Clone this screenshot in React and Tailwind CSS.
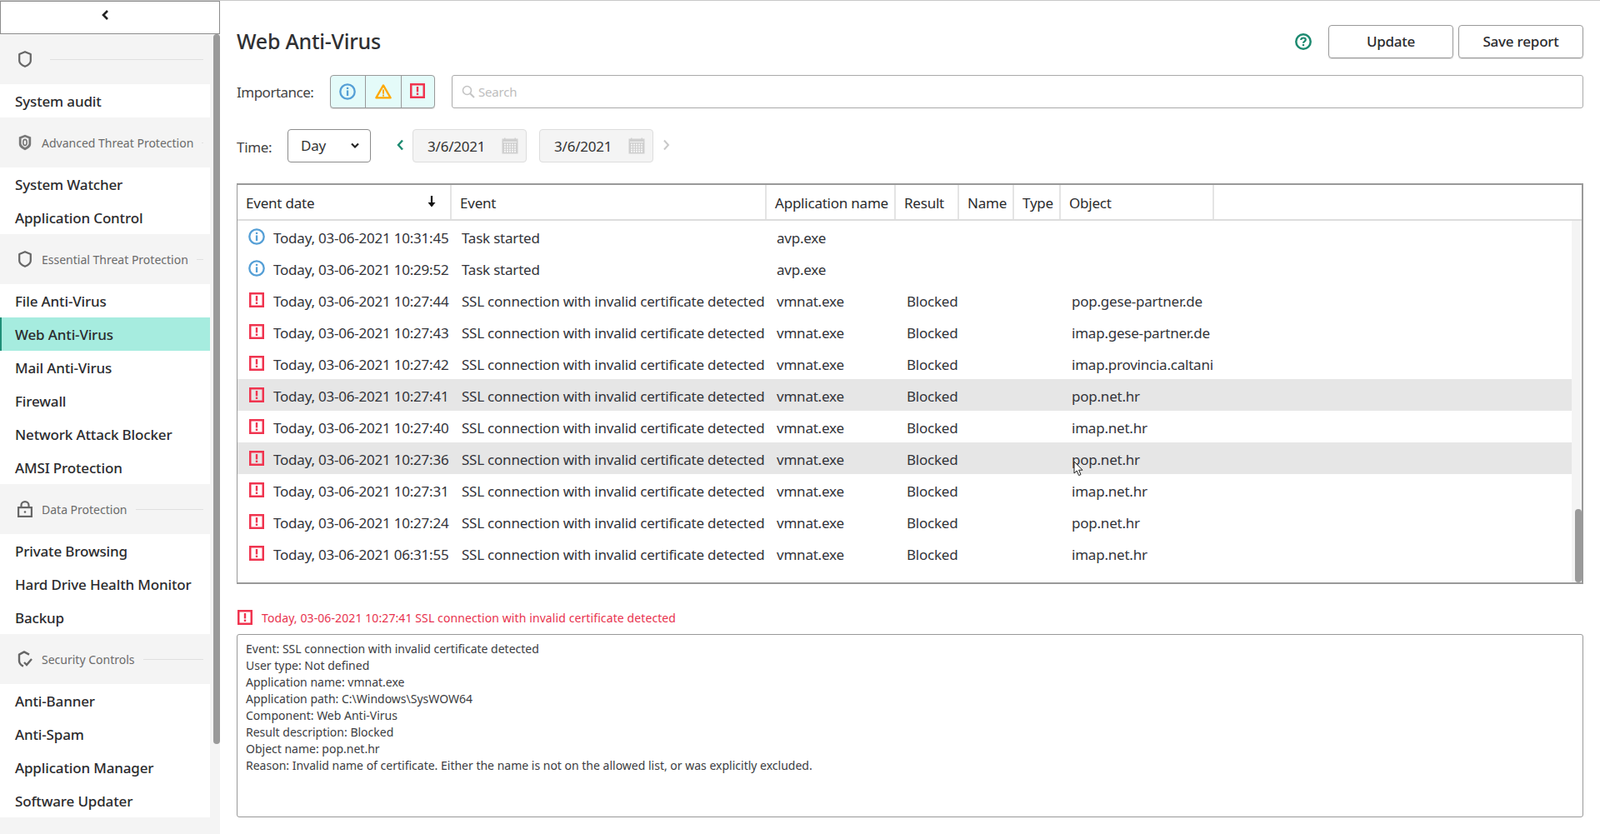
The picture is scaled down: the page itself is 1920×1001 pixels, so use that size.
const Info = ({ s = 20 }) => (
  <svg width={s} height={s} viewBox="0 0 20 20" fill="none">
    <circle cx="10" cy="10" r="8.7" stroke="#559fd6" strokeWidth="2.3" />
    <rect x="8.9" y="8.4" width="2.3" height="6.6" fill="#559fd6" />
    <rect x="8.9" y="4.8" width="2.3" height="2.2" fill="#559fd6" />
  </svg>
);
const Warn = () => (
  <svg width="20" height="20" viewBox="0 0 20 20" fill="none">
    <path d="M10 2.4 L18.6 17.4 H1.4 Z" stroke="#ffa800" strokeWidth="2.3" strokeLinejoin="round" />
    <rect x="9" y="7.5" width="2" height="5.2" fill="#ffa800" />
    <rect x="9" y="13.6" width="2" height="2" fill="#ffa800" />
  </svg>
);
const Danger = ({ s = 18 }) => (
  <svg width={s} height={s} viewBox="0 0 18 18" fill="none">
    <rect x="1.25" y="1.25" width="15.5" height="15.5" stroke="#f0344f" strokeWidth="2.5" />
    <rect x="7.8" y="4" width="2.4" height="6.4" fill="#f0344f" />
    <rect x="7.8" y="11.6" width="2.4" height="2.4" fill="#f0344f" />
  </svg>
);
const Calendar = () => (
  <svg width="20" height="20" viewBox="0 0 20 20" fill="#cfcfcf">
    <rect x="0.5" y="1.5" width="19" height="18" />
    <rect x="3" y="0.5" width="1.5" height="2" />
    <rect x="15.5" y="0.5" width="1.5" height="2" />
    <g fill="#f4f4f4">
      <rect x="2" y="5" width="16" height="1" />
      {[7.5, 10.5, 13.5, 16].map((y) =>
        [3, 6, 9, 12, 15].map((x) => <rect key={x + "-" + y} x={x} y={y} width="2" height="1.8" />)
      )}
    </g>
  </svg>
);
const Shield = () => (
  <svg width="16" height="20" viewBox="0 0 16 20" fill="none">
    <path d="M8 1.2 L14.8 4 V12 C14.8 15 11 17.6 8 18.8 C5 17.6 1.2 15 1.2 12 V4 Z" stroke="#666" strokeWidth="2.2" strokeLinejoin="round" />
  </svg>
);
const ShieldCore = () => (
  <svg width="16" height="20" viewBox="0 0 16 20" fill="none">
    <path d="M8 0.8 L15.2 3.6 V12 C15.2 15.4 11 18 8 19.2 C5 18 0.8 15.4 0.8 12 V3.6 Z" fill="#777" />
    <path d="M8 3.6 L12.4 5.2 V11.6 C12.4 13.4 10 15.2 8 16 C6 15.2 3.6 13.4 3.6 11.6 V5.2 Z" fill="#f4f4f4" />
    <ellipse cx="8" cy="10" rx="2.2" ry="3.6" fill="none" stroke="#777" strokeWidth="1.6" />
  </svg>
);
const Lock = () => (
  <svg width="18" height="20" viewBox="0 0 18 20" fill="none">
    <path d="M4.5 9 V5.5 C4.5 3 6.5 1.2 9 1.2 C11.5 1.2 13.5 3 13.5 5.5 V9" stroke="#666" strokeWidth="2.2" />
    <rect x="1.1" y="8.1" width="15.8" height="10.8" stroke="#666" strokeWidth="2.2" />
    <circle cx="9" cy="13.5" r="1.3" fill="#666" />
  </svg>
);
const ShieldCheck = () => (
  <svg width="18" height="20" viewBox="0 0 18 20" fill="none">
    <path d="M14 4.6 L8 1.4 L2 4.6 V12 C2 15 4.4 17.4 7 18.6" stroke="#666" strokeWidth="2.4" strokeLinejoin="round" />
    <path d="M8 14 L11 17 L17 10" stroke="#666" strokeWidth="2.4" />
  </svg>
);

const Section = ({ icon, label }) => (
  <div className="h-[60px] pl-[20px] pr-[8px] flex items-center">
    <span className="w-[20px] flex justify-center shrink-0">{icon}</span>
    <span className="ml-[10px] text-[14px] text-[#6b6b6b] whitespace-nowrap">{label}</span>
    <span className="ml-[10px] flex-1 h-px bg-[#e0e0e0]" />
  </div>
);
const Item = ({ label, active }) => (
  <div
    className={
      "h-[40px] pt-[1px] flex items-center text-[17px] font-medium text-[#2b2b2e] whitespace-nowrap tracking-[-0.15px] " +
      (active ? "bg-[#a6ecdf] border-l-[2px] border-[#1f8f78] pl-[16px]" : "bg-white pl-[18px]")
    }
  >
    {label}
  </div>
);

const cols = ["w-[257px]", "w-[378px]", "w-[155px]", "w-[76px]", "w-[66px]", "w-[56px]", "w-[184px]"];
const heads = ["Event date", "Event", "Application name", "Result", "Name", "Type", "Object"];

const SSL = "SSL connection with invalid certificate detected";
const rows = [
  ["i", "10:31:45", "Task started", "avp.exe", "", ""],
  ["i", "10:29:52", "Task started", "avp.exe", "", ""],
  ["d", "10:27:44", SSL, "vmnat.exe", "Blocked", "pop.gese-partner.de"],
  ["d", "10:27:43", SSL, "vmnat.exe", "Blocked", "imap.gese-partner.de"],
  ["d", "10:27:42", SSL, "vmnat.exe", "Blocked", "imap.provincia.caltanissetta.it"],
  ["d", "10:27:41", SSL, "vmnat.exe", "Blocked", "pop.net.hr", true],
  ["d", "10:27:40", SSL, "vmnat.exe", "Blocked", "imap.net.hr"],
  ["d", "10:27:36", SSL, "vmnat.exe", "Blocked", "pop.net.hr", true],
  ["d", "10:27:31", SSL, "vmnat.exe", "Blocked", "imap.net.hr"],
  ["d", "10:27:24", SSL, "vmnat.exe", "Blocked", "pop.net.hr"],
  ["d", "06:31:55", SSL, "vmnat.exe", "Blocked", "imap.net.hr"],
];

const details = [
  "Event: SSL connection with invalid certificate detected",
  "User type: Not defined",
  "Application name: vmnat.exe",
  "Application path: C:\\Windows\\SysWOW64",
  "Component: Web Anti-Virus",
  "Result description: Blocked",
  "Object name: pop.net.hr",
  "Reason: Invalid name of certificate. Either the name is not on the allowed list, or was explicitly excluded.",
];

export default function App() {
  return (
    <div className="h-screen w-full overflow-hidden bg-white font-['Open_Sans',sans-serif] text-[#2b2b2e]">
      <div className="h-px bg-[#c8c8c8]" />
      <div className="flex h-[1000px]">
        <aside className="w-[264px] shrink-0 bg-[#f4f4f4] flex flex-col">
          <button className="h-[40px] w-[264px] shrink-0 bg-white border border-[#8c8c8c] flex items-center justify-center pb-[6px] pr-[12px]">
            <svg width="10" height="14" viewBox="0 0 10 14" fill="none">
              <path d="M8 2 L3 7 L8 12" stroke="#222" strokeWidth="2.6" />
            </svg>
          </button>
          <div className="flex flex-1 gap-[4px]">
            <div className="w-[252px]">
              <Section icon={<Shield />} label="" />
              <Item label="System audit" />
              <Section icon={<ShieldCore />} label="Advanced Threat Protection" />
              <Item label="System Watcher" />
              <Item label="Application Control" />
              <Section icon={<Shield />} label="Essential Threat Protection" />
              <Item label="File Anti-Virus" />
              <Item label="Web Anti-Virus" active />
              <Item label="Mail Anti-Virus" />
              <Item label="Firewall" />
              <Item label="Network Attack Blocker" />
              <Item label="AMSI Protection" />
              <Section icon={<Lock />} label="Data Protection" />
              <Item label="Private Browsing" />
              <Item label="Hard Drive Health Monitor" />
              <Item label="Backup" />
              <Section icon={<ShieldCheck />} label="Security Controls" />
              <Item label="Anti-Banner" />
              <Item label="Anti-Spam" />
              <Item label="Application Manager" />
              <Item label="Software Updater" />
            </div>
            <div className="w-[8px] h-[852px] bg-[#9a9a9a] rounded-[4px]" />
          </div>
        </aside>

        <main className="flex-1 min-w-0 px-[20px] flex flex-col">
          <div className="mt-[29px] h-[40px] flex items-center">
            <h1 className="text-[25px] font-medium text-[#2f3033] tracking-[-0.25px]">Web Anti-Virus</h1>
            <div className="ml-auto w-[20px] h-[20px] mr-[20px]">
              <svg width="20" height="20" viewBox="0 0 20 20" fill="none">
                <circle cx="10" cy="10" r="8.7" stroke="#1d8a70" strokeWidth="2.5" />
                <path d="M7.2 8 C7.2 6.4 8.4 5.5 10 5.5 C11.6 5.5 12.8 6.5 12.8 7.8 C12.8 9.6 10 9.6 10 11.8" stroke="#1d8a70" strokeWidth="2.2" fill="none" />
                <rect x="8.9" y="13" width="2.2" height="2.2" fill="#1d8a70" />
              </svg>
            </div>
            <button className="w-[150px] h-[40px] border border-[#999] rounded-[4px] shadow-[0_1px_1px_rgba(0,0,0,0.15)] text-[17px] font-medium tracking-[-0.25px]">Update</button>
            <button className="ml-[6px] w-[150px] h-[40px] border border-[#999] rounded-[4px] shadow-[0_1px_1px_rgba(0,0,0,0.15)] text-[17px] font-medium tracking-[-0.2px]">Save report</button>
          </div>

          <div className="mt-[20px] h-[40px] flex items-center">
            <span className="w-[112px] text-[17px] text-[#444] tracking-[-0.5px] pt-[1px]">Importance:</span>
            <div className="flex h-[40px] w-[126px] bg-[#e4fbf9] border border-[#999] rounded-[4px] shadow-[0_1px_1px_rgba(0,0,0,0.15)]">
              <span className="w-[42px] pr-[2px] flex items-center justify-center border-r border-[#999]"><Info s={20} /></span>
              <span className="w-[43px] flex items-center justify-center border-r border-[#999]"><Warn /></span>
              <span className="flex-1 pr-[1px] pb-[2px] flex items-center justify-center"><Danger s={18} /></span>
            </div>
            <div className="ml-[20px] flex-1 h-[40px] border border-[#aaa] rounded-[3px] flex items-center pl-[11px]">
              <svg width="16" height="16" viewBox="0 0 16 16" fill="none">
                <circle cx="6.5" cy="6.5" r="5" stroke="#c4c4c4" strokeWidth="1.6" />
                <path d="M10.2 10.2 L15 15" stroke="#c4c4c4" strokeWidth="2" />
              </svg>
              <span className="ml-[4px] text-[15px] text-[#bdbdbd] tracking-[-0.2px]">Search</span>
            </div>
          </div>

          <div className="mt-[25px] h-[40px] flex items-center">
            <span className="w-[61px] text-[17px] text-[#444] tracking-[-0.3px] pt-[3px]">Time:</span>
            <div className="w-[100px] h-[40px] border border-[#8c8c8c] rounded-[4px] flex items-center pl-[15px] pr-[13px] justify-between">
              <span className="text-[17px] tracking-[-0.2px] text-[#333]">Day</span>
              <svg width="10" height="8" viewBox="0 0 10 8" fill="none">
                <path d="M1 1.5 L5 5.5 L9 1.5" stroke="#222" strokeWidth="2.2" />
              </svg>
            </div>
            <div className="w-[50px] flex justify-center pl-[20px] pb-[2px]">
              <svg width="9" height="14" viewBox="0 0 9 14" fill="none">
                <path d="M7 1.5 L2 7 L7 12.5" stroke="#1d8a70" strokeWidth="2.4" />
              </svg>
            </div>
            <div className="w-[137px] h-[40px] bg-[#f4f4f4] border border-[#ddd] rounded-[4px] flex items-center pl-[17px] pr-[9px] justify-between">
              <span className="text-[17px] tracking-[-0.2px] text-[#333] pt-[1px]">3/6/2021</span>
              <Calendar />
            </div>
            <div className="ml-[15px] w-[137px] h-[40px] bg-[#f4f4f4] border border-[#ddd] rounded-[4px] flex items-center pl-[17px] pr-[9px] justify-between">
              <span className="text-[17px] tracking-[-0.2px] text-[#333] pt-[1px]">3/6/2021</span>
              <Calendar />
            </div>
            <div className="ml-[11px] pb-[2px]">
              <svg width="9" height="14" viewBox="0 0 9 14" fill="none">
                <path d="M2 1.5 L7 7 L2 12.5" stroke="#c8c8c8" strokeWidth="2" />
              </svg>
            </div>
          </div>

          <div className="mt-[25px] h-[481px] border-t-2 border-l border-r-2 border-b-2 border-[#999] flex flex-col relative">
            <div className="h-[43px] border-b-2 border-[#ddd] flex shrink-0">
              {heads.map((h, i) => (
                <div key={h} className={cols[i] + " shrink-0 h-full border-r-2 border-[#e4e4e4] pl-[10px] pt-[2px] flex items-center text-[17px] text-[#2b2b2e] tracking-[-0.22px] whitespace-nowrap relative"}>
                  {h}
                  {i === 0 && (
                    <svg className="absolute left-[227px] top-[12px]" width="12" height="16" viewBox="0 0 12 16" fill="none">
                      <path d="M6 1 V13" stroke="#111" strokeWidth="2.2" />
                      <path d="M1.5 9 L6 14.5 L10.5 9 Z" fill="#111" />
                    </svg>
                  )}
                </div>
              ))}
            </div>
            <div className="flex flex-1 min-h-0">
              <div className="flex-1 min-w-0">
                {rows.map((r, idx) => (
                  <div key={idx} className={"h-[38px] pt-[4px] flex items-center text-[17px] text-[#33343a] tracking-[-0.22px] whitespace-nowrap " + (r[6] ? "bg-[#e6e6e6]" : "")}>
                    <div className={cols[0] + " shrink-0 flex items-center pl-[13px]"}>
                      <span className="w-[20px] h-[20px] flex items-center justify-center -mt-[4px]">
                        {r[0] === "i" ? <Info s={20} /> : <Danger s={18} />}
                      </span>
                      <span className="ml-[10px]">Today, 03-06-2021 {r[1]}</span>
                    </div>
                    <div className={cols[1] + " shrink-0 pl-[12px]"}>{r[2]}</div>
                    <div className={cols[2] + " shrink-0 pl-[12px]"}>{r[3]}</div>
                    <div className={cols[3] + " shrink-0 pl-[13px]"}>{r[4]}</div>
                    <div className={cols[4] + " shrink-0"} />
                    <div className={cols[5] + " shrink-0"} />
                    <div className={cols[6] + " shrink-0 pl-[13px] pr-[1px]"}>
                      <div className="overflow-hidden">{r[5]}</div>
                    </div>
                  </div>
                ))}
              </div>
              <div className="w-[12px] shrink-0 bg-[#f4f4f4] flex flex-col justify-end items-end">
                <div className="w-[8px] h-[88px] bg-[#9a9a9a] rounded-[4px]" />
              </div>
            </div>
            <svg className="absolute left-[1003px] top-[331px]" width="12" height="19" viewBox="0 0 12 19" fill="#fff">
              <path d="M1 1 V15 L4.2 12 L6.6 17.6 L9 16.6 L6.6 11.2 H11 Z" stroke="#222" strokeWidth="1" />
            </svg>
          </div>

          <div className="mt-[31px] h-[18px] flex items-center pl-[1px]">
            <Danger s={18} />
            <span className="ml-[11px] text-[14px] text-[#e8334e] tracking-[0.1px] whitespace-nowrap">Today, 03-06-2021 10:27:41 SSL connection with invalid certificate detected</span>
          </div>

          <div className="mt-[11px] h-[220px] border border-[#999] rounded-[3px] pl-[10px] pt-[7px] text-[14px] leading-[20px] text-[#3c3d42]">
            {details.map((d) => (
              <div key={d} className="whitespace-nowrap">{d}</div>
            ))}
          </div>
        </main>
      </div>
    </div>
  );
}
